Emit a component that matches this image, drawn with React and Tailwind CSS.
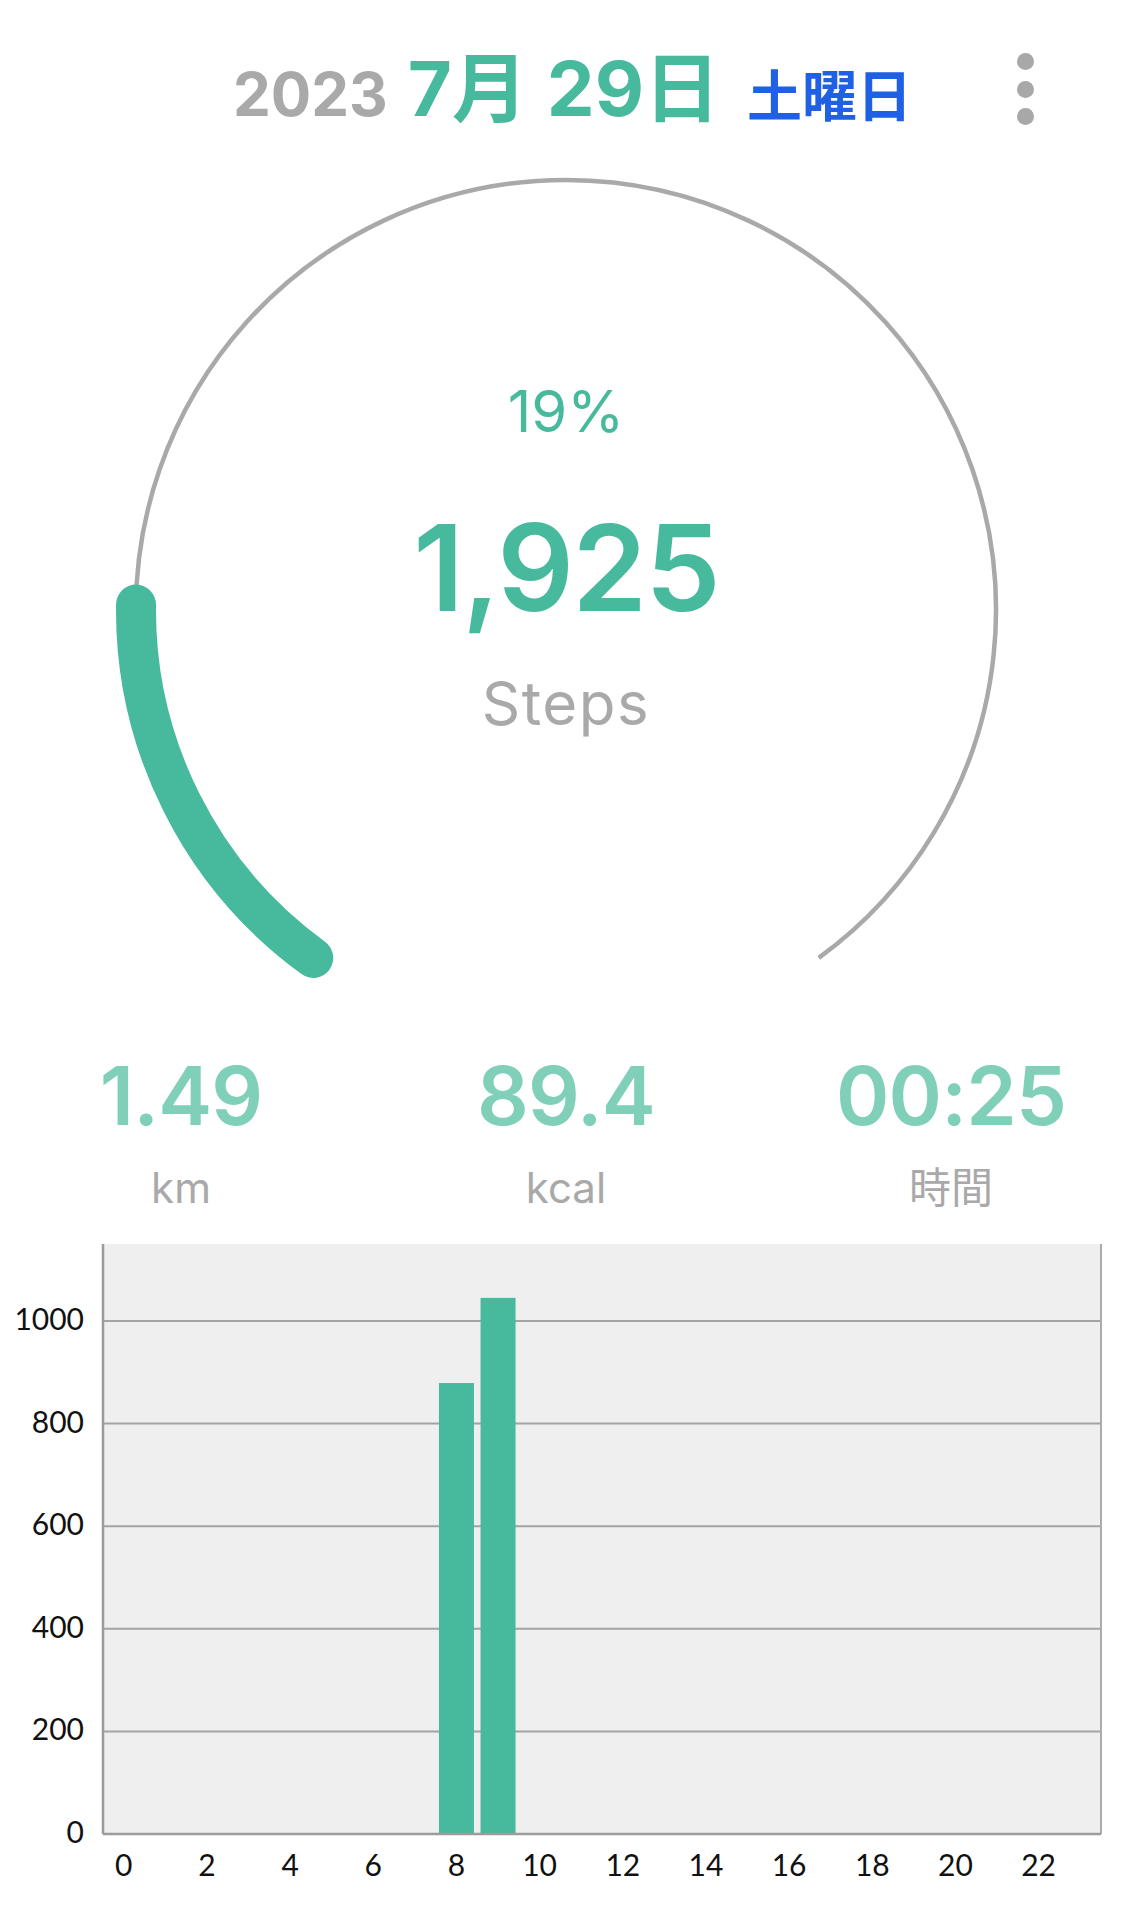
import React from "react";

const GREEN = "#47b99d";

const hourly = [0, 0, 0, 0, 0, 0, 0, 0, 879, 1045, 0, 0, 0, 0, 0, 0, 0, 0, 0, 0, 0, 0, 0, 0];

function polar(cx, cy, r, deg) {
  const a = (deg * Math.PI) / 180;
  return [cx + r * Math.cos(a), cy + r * Math.sin(a)];
}

function arcPath(cx, cy, r, from, to) {
  const [x1, y1] = polar(cx, cy, r, from);
  const [x2, y2] = polar(cx, cy, r, to);
  const large = to - from > 180 ? 1 : 0;
  return `M ${x1} ${y1} A ${r} ${r} 0 ${large} 1 ${x2} ${y2}`;
}

function Gauge({ percent, steps }) {
  const start = 126;
  const sweep = 288;
  const end = start + (sweep * percent) / 100;
  return (
    <div className="relative w-[900px] h-[830px] mx-auto">
      <svg width="900" height="830" viewBox="0 0 900 830" className="absolute inset-0">
        <path d={arcPath(450, 450, 430, start, start + sweep)} fill="none" stroke="#a9a9a9" strokeWidth="4.5" />
        <path d={arcPath(450, 450, 430, start, end)} fill="none" stroke={GREEN} strokeWidth="40" strokeLinecap="round" />
      </svg>
      <div className="absolute inset-x-0 top-[222px] flex flex-col items-center">
        <span className="text-[58px] leading-none text-[#47b99d]">{percent}%</span>
        <span className="mt-[68px] text-[120px] leading-none font-semibold tracking-[-0.015em] text-[#47b99d]">{steps}</span>
        <span className="mt-[45px] text-[60px] leading-none tracking-[0.025em] text-[#a9a9a9]">Steps</span>
      </div>
    </div>
  );
}

function Stat({ value, label }) {
  return (
    <div className="w-[385px] shrink-0 flex flex-col items-center">
      <span className="text-[81px] leading-none font-semibold tracking-[-0.01em] text-[#7fcfb9]">{value}</span>
      <span className="mt-[30px] text-[42px] leading-none text-[#a9a9a9]">{label}</span>
    </div>
  );
}

function HourChart() {
  const left = 103;
  const right = 1101;
  const top = 14;
  const bottom = 604;
  const max = 1150;
  const yOf = (v) => bottom - (v / max) * (bottom - top);
  const slot = (right - left) / 24;
  const barW = 35;
  return (
    <svg width="1132" height="690" viewBox="0 0 1132 690" className="block font-['Lato',sans-serif]">
      <rect x={left} y={top} width={right - left} height={bottom - top} fill="#efefef" />
      {[200, 400, 600, 800, 1000].map((v) => (
        <line key={v} x1={left} x2={right} y1={yOf(v)} y2={yOf(v)} stroke="#a3a3a3" strokeWidth="2" />
      ))}
      {hourly.map((v, i) =>
        v > 0 ? (
          <rect key={i} x={left + i * slot + (slot - barW) / 2} y={yOf(v)} width={barW} height={bottom - yOf(v)} fill={GREEN} />
        ) : null
      )}
      <line x1={left} x2={left} y1={top} y2={bottom} stroke="#9c9c9c" strokeWidth="2.5" />
      <line x1={right} x2={right} y1={top} y2={bottom} stroke="#ababab" strokeWidth="2" />
      <line x1={left} x2={right} y1={bottom} y2={bottom} stroke="#9c9c9c" strokeWidth="2.5" />
      {[0, 200, 400, 600, 800, 1000].map((v) => (
        <text key={v} x="84" y={yOf(v) + 9} textAnchor="end" fontSize="30" fill="#111">
          {v}
        </text>
      ))}
      {Array.from({ length: 12 }, (_, k) => k * 2).map((h) => (
        <text key={h} x={left + (h + 0.5) * slot} y="646" textAnchor="middle" fontSize="30" fill="#111">
          {h}
        </text>
      ))}
    </svg>
  );
}

export default function App() {
  return (
    <div className="w-[1132px] h-[1920px] overflow-hidden bg-white font-['Inter','Noto_Sans_CJK_JP',sans-serif]">
      <header className="grid grid-cols-[1fr_auto_1fr] h-[160px]">
        <div />
        <div className="flex items-baseline pt-[50px] ml-[13px] leading-none font-bold">
          <span className="text-[60px] text-[#a9a9a9]">2023</span>
          <span className="ml-[20px] text-[76px] text-[#47b99d]">7月</span>
          <span className="ml-[19px] text-[76px] text-[#47b99d]">29日</span>
          <span className="ml-[27px] text-[55px] text-[#1f60e4]">土曜日</span>
        </div>
        <div className="flex justify-end pr-[98px] pt-[53px]">
          <button className="flex flex-col gap-[10.5px]" aria-label="menu">
            <span className="w-[17px] h-[17px] rounded-full bg-[#a8a8a8]" />
            <span className="w-[17px] h-[17px] rounded-full bg-[#a8a8a8]" />
            <span className="w-[17px] h-[17px] rounded-full bg-[#a8a8a8]" />
          </button>
        </div>
      </header>

      <Gauge percent={19} steps="1,925" />

      <div className="mt-[66px] flex justify-center">
        <Stat value="1.49" label="km" />
        <Stat value="89.4" label="kcal" />
        <Stat value="00:25" label="時間" />
      </div>

      <div className="mt-[21px]">
        <HourChart />
      </div>
    </div>
  );
}
